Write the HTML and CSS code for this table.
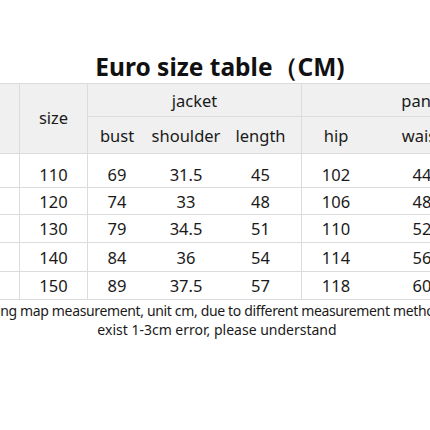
FILE: index.html
```html
<!DOCTYPE html>
<html>
<head>
<meta charset="utf-8">
<link rel="stylesheet" href="styles.css">
</head>
<body>
<div class="page">
  <h1 class="title">Euro size table（CM)</h1>
  <div class="sizes">
    <div class="hd blank vr"></div>
    <div class="hd size vr">size</div>
    <div class="hd jacket vr">jacket</div>
    <div class="hd pants">pants</div>
    <div class="hd sub">bust</div>
    <div class="hd sub">shoulder</div>
    <div class="hd sub vr len">length</div>
    <div class="hd sub">hip</div>
    <div class="hd sub">waist</div>
    <div class="hd sub">length</div>

    <div class="cell vr r1"></div><div class="cell vr r1">110</div><div class="cell r1">69</div><div class="cell r1">31.5</div><div class="cell vr len r1">45</div><div class="cell r1">102</div><div class="cell r1">44</div><div class="cell r1">62</div>
    <div class="cell vr"></div><div class="cell vr">120</div><div class="cell">74</div><div class="cell">33</div><div class="cell vr len">48</div><div class="cell">106</div><div class="cell">48</div><div class="cell">66</div>
    <div class="cell vr"></div><div class="cell vr">130</div><div class="cell">79</div><div class="cell">34.5</div><div class="cell vr len">51</div><div class="cell">110</div><div class="cell">52</div><div class="cell">70</div>
    <div class="cell vr"></div><div class="cell vr">140</div><div class="cell">84</div><div class="cell">36</div><div class="cell vr len">54</div><div class="cell">114</div><div class="cell">56</div><div class="cell">74</div>
    <div class="cell vr"></div><div class="cell vr">150</div><div class="cell">89</div><div class="cell">37.5</div><div class="cell vr len">57</div><div class="cell">118</div><div class="cell">60</div><div class="cell">78</div>
  </div>
  <div class="note">
    <p class="line1">Tiling map measurement, unit cm, due to different measurement methods, there may</p>
    <p class="line2">exist 1-3cm error, please understand</p>
  </div>
</div>
</body>
</html>
```

FILE: styles.css
```css
html, body {
  margin: 0;
  padding: 0;
  background: #ffffff;
}
body {
  width: 430px;
  height: 430px;
  overflow: hidden;
  font-family: "Noto Sans", "Open Sans", sans-serif;
  color: #1a1a1a;
}
.page {
  width: 430px;
}
.title {
  margin: 52px 0 1px 0;
  height: 30px;
  line-height: 30px;
  font-size: 24.5px;
  font-weight: 700;
  text-align: center;
  padding-left: 10px;
  color: #111;
  white-space: nowrap;
}
.sizes {
  margin-left: -48px;
  width: 592px;
  display: grid;
  grid-template-columns: 68px 68px 58px 80px 76px 68px 104px 70px;
  grid-template-rows: 33px 37px 34px 27px 28px 29px 28px;
  border-top: 1px solid #dcdcdc;
  font-size: 16.5px;
}
.hd, .cell {
  box-sizing: border-box;
  border-bottom: 1px solid #dcdcdc;
  display: flex;
  align-items: center;
  justify-content: center;
  white-space: nowrap;
}
.hd {
  background: #f0f0f0;
}
.vr {
  border-right: 1px solid #dcdcdc;
}
.blank { grid-column: 1; grid-row: 1 / 3; }
.size { grid-column: 2; grid-row: 1 / 3; padding-bottom: 3px; }
.jacket { grid-column: 3 / 6; grid-row: 1; }
.pants { grid-column: 6 / 9; grid-row: 1; }
.len { padding-right: 6px; }
.r1 { padding-top: 8px; }
.note {
  padding-top: 1px;
  font-size: 14px;
  line-height: 19px;
  color: #1a1a1a;
}
.note p {
  margin: 0;
  white-space: nowrap;
}
.note .line1 {
  margin-left: -17px;
  letter-spacing: -0.35px;
}
.note .line2 {
  text-align: center;
  padding-left: 4px;
}
```
